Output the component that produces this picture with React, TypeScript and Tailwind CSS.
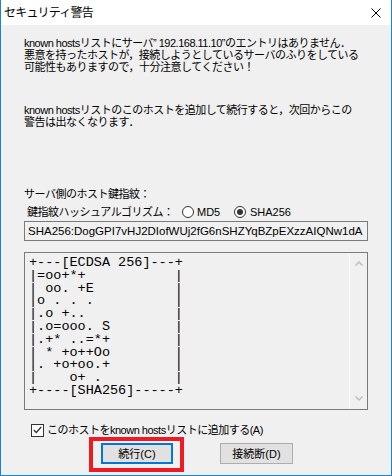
import React from 'react';

const randomArt = [
  '+---[ECDSA 256]---+',
  '|=oo+*+           |',
  '| oo. +E          |',
  '|o . . .          |',
  '|.o +..           |',
  '|.o=ooo. S        |',
  '|.+* ..=*+        |',
  '| * +o++Oo        |',
  '|. +o+oo.+        |',
  '|    o+ .         |',
  '+----[SHA256]-----+',
];

function Radio({ checked }: { checked?: boolean }) {
  return (
    <span className="flex h-[12px] w-[12px] items-center justify-center rounded-full border border-[#333333] bg-white">
      {checked && <span className="h-[6px] w-[6px] rounded-full bg-[#333333]" />}
    </span>
  );
}

export default function App() {
  return (
    <div className="relative flex h-[476px] w-[392px] flex-col border-x border-b border-[#1883d7] bg-[#f0f0f0] font-['Liberation_Sans','Noto_Sans_CJK_JP',sans-serif] text-[11px] leading-[12px] text-black">
      {/* title bar */}
      <div className="flex h-[25px] shrink-0 items-center justify-between bg-white pl-[3px] pr-[10px]">
        <span className="text-[12px] tracking-[-0.8px]">セキュリティ警告</span>
        <svg width="10" height="10" viewBox="0 0 10 10" className="mr-[0px]">
          <path d="M0.5 0.5 L9.5 9.5 M9.5 0.5 L0.5 9.5" stroke="#000" strokeWidth="1" />
        </svg>
      </div>

      <div className="flex flex-col pl-[23px] tracking-[-0.5px]">
        <p className="mt-[12px] whitespace-nowrap">
          known hostsリストにサーバ” 192.168.11.10”のエントリはありません．
          <br />
          悪意を持ったホストが，接続しようとしているサーバのふりをしている
          <br />
          可能性もありますので，十分注意してください！
        </p>

        <p className="mt-[31px] whitespace-nowrap">
          known hostsリストのこのホストを追加して続行すると，次回からこの
          <br />
          警告は出なくなります．
        </p>

        <p className="mt-[60px] whitespace-nowrap">サーバ側のホスト鍵指紋：</p>

        <div className="mt-[5px] flex h-[14px] items-center pl-[3px]">
          <span className="w-[155px] whitespace-nowrap">鍵指紋ハッシュアルゴリズム：</span>
          <Radio />
          <span className="ml-[3px] w-[37px] tracking-normal">MD5</span>
          <Radio checked />
          <span className="ml-[4px] tracking-normal">SHA256</span>
        </div>

        <div className="mt-[2px] flex h-[20px] w-[344px] items-center border border-[#7a7a7a] bg-[#f0f0f0] pl-[3px] text-[11.5px] tracking-normal">
          SHA256:DogGPI7vHJ2DIofWUj2fG6nSHZYqBZpEXzzAIQNw1dA
        </div>

        <div className="mt-[11px] flex h-[158px] w-[344px] border border-[#7a7a7a] bg-[#f0f0f0]">
          <pre className="flex-1 pl-[4px] pt-[4px] font-['Liberation_Mono',monospace] text-[13.5px] leading-[12.8px] tracking-normal">
            {randomArt.join('\n')}
          </pre>
          <div className="flex w-[18px] flex-col items-center justify-between border-l border-[#fbfbfb] py-[8px]">
            <svg width="8" height="5" viewBox="0 0 8 5">
              <path d="M0.5 4.5 L4 1 L7.5 4.5" fill="none" stroke="#bfbfbf" strokeWidth="1.5" />
            </svg>
            <svg width="8" height="5" viewBox="0 0 8 5">
              <path d="M0.5 0.5 L4 4 L7.5 0.5" fill="none" stroke="#bfbfbf" strokeWidth="1.5" />
            </svg>
          </div>
        </div>

        <div className="mt-[12px] flex h-[16px] items-center pl-[7px]">
          <span className="flex h-[13px] w-[13px] items-center justify-center border border-[#333333] bg-white">
            <svg width="9" height="8" viewBox="0 0 9 8">
              <path d="M0.8 4 L3.3 6.5 L8.2 1" fill="none" stroke="#333" strokeWidth="1.3" />
            </svg>
          </span>
          <span className="ml-[3px] whitespace-nowrap">このホストをknown hostsリストに追加する(A)</span>
        </div>

        <div className="mt-[5px] flex pl-[77px]">
          <button className="flex h-[21px] w-[72px] items-center justify-center border-2 border-[#0078d7] bg-[#e1e1e1] tracking-normal">
            続行(C)
          </button>
          <button className="ml-[47px] flex h-[21px] w-[73px] items-center justify-center border border-[#adadad] bg-[#e1e1e1] tracking-normal">
            接続断(D)
          </button>
        </div>
      </div>

      {/* annotation highlight */}
      <div className="absolute left-[88px] top-[437px] h-[35px] w-[95px] border-4 border-[#ed1c24]" />
    </div>
  );
}
